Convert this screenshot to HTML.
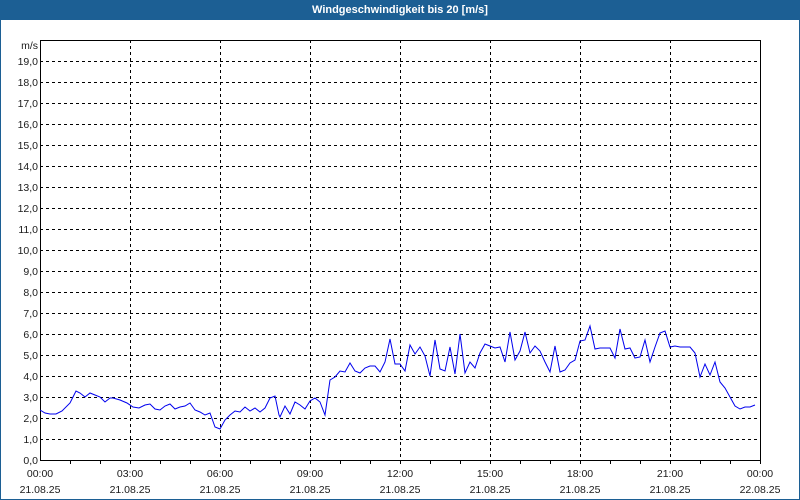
<!DOCTYPE html>
<html><head><meta charset="utf-8"><style>
html,body{margin:0;padding:0;background:#fff;}
svg{display:block;}
text{font-family:"Liberation Sans",sans-serif;font-size:10.5px;fill:#1a1a1a;}
</style></head><body>
<svg width="800" height="500" viewBox="0 0 800 500" xmlns="http://www.w3.org/2000/svg">
<rect x="0" y="0" width="800" height="500" fill="#fff"/>
<rect x="0.5" y="0.5" width="799" height="499" fill="none" stroke="#1c5f94"/>
<rect x="0" y="0" width="800" height="20" fill="#1c5f94"/>
<text x="400" y="13" text-anchor="middle" style="fill:#fff;font-weight:bold;font-size:11px">Windgeschwindigkeit bis 20 [m/s]</text>
<g stroke="#000" stroke-dasharray="3,3" stroke-width="1">
<line x1="40" y1="61.5" x2="760" y2="61.5"/><line x1="40" y1="82.5" x2="760" y2="82.5"/><line x1="40" y1="103.5" x2="760" y2="103.5"/><line x1="40" y1="124.5" x2="760" y2="124.5"/><line x1="40" y1="145.5" x2="760" y2="145.5"/><line x1="40" y1="166.5" x2="760" y2="166.5"/><line x1="40" y1="187.5" x2="760" y2="187.5"/><line x1="40" y1="208.5" x2="760" y2="208.5"/><line x1="40" y1="229.5" x2="760" y2="229.5"/><line x1="40" y1="250.5" x2="760" y2="250.5"/><line x1="40" y1="271.5" x2="760" y2="271.5"/><line x1="40" y1="292.5" x2="760" y2="292.5"/><line x1="40" y1="313.5" x2="760" y2="313.5"/><line x1="40" y1="334.5" x2="760" y2="334.5"/><line x1="40" y1="355.5" x2="760" y2="355.5"/><line x1="40" y1="376.5" x2="760" y2="376.5"/><line x1="40" y1="397.5" x2="760" y2="397.5"/><line x1="40" y1="418.5" x2="760" y2="418.5"/><line x1="40" y1="439.5" x2="760" y2="439.5"/>
<line x1="130.5" y1="40" x2="130.5" y2="460"/><line x1="220.5" y1="40" x2="220.5" y2="460"/><line x1="310.5" y1="40" x2="310.5" y2="460"/><line x1="400.5" y1="40" x2="400.5" y2="460"/><line x1="490.5" y1="40" x2="490.5" y2="460"/><line x1="580.5" y1="40" x2="580.5" y2="460"/><line x1="670.5" y1="40" x2="670.5" y2="460"/>
</g>
<rect x="40.5" y="40.5" width="720" height="420" fill="none" stroke="#000"/>
<g stroke="#000">
<line x1="70.5" y1="460" x2="70.5" y2="464"/><line x1="100.5" y1="460" x2="100.5" y2="464"/><line x1="130.5" y1="460" x2="130.5" y2="464"/><line x1="160.5" y1="460" x2="160.5" y2="464"/><line x1="190.5" y1="460" x2="190.5" y2="464"/><line x1="220.5" y1="460" x2="220.5" y2="464"/><line x1="250.5" y1="460" x2="250.5" y2="464"/><line x1="280.5" y1="460" x2="280.5" y2="464"/><line x1="310.5" y1="460" x2="310.5" y2="464"/><line x1="340.5" y1="460" x2="340.5" y2="464"/><line x1="370.5" y1="460" x2="370.5" y2="464"/><line x1="400.5" y1="460" x2="400.5" y2="464"/><line x1="430.5" y1="460" x2="430.5" y2="464"/><line x1="460.5" y1="460" x2="460.5" y2="464"/><line x1="490.5" y1="460" x2="490.5" y2="464"/><line x1="520.5" y1="460" x2="520.5" y2="464"/><line x1="550.5" y1="460" x2="550.5" y2="464"/><line x1="580.5" y1="460" x2="580.5" y2="464"/><line x1="610.5" y1="460" x2="610.5" y2="464"/><line x1="640.5" y1="460" x2="640.5" y2="464"/><line x1="670.5" y1="460" x2="670.5" y2="464"/><line x1="700.5" y1="460" x2="700.5" y2="464"/><line x1="730.5" y1="460" x2="730.5" y2="464"/><line x1="760.5" y1="460" x2="760.5" y2="464"/>
</g>
<g text-anchor="end">
<text x="38" y="49">m/s</text>
<text x="38" y="65">19,0</text><text x="38" y="86">18,0</text><text x="38" y="107">17,0</text><text x="38" y="128">16,0</text><text x="38" y="149">15,0</text><text x="38" y="170">14,0</text><text x="38" y="191">13,0</text><text x="38" y="212">12,0</text><text x="38" y="233">11,0</text><text x="38" y="254">10,0</text><text x="38" y="275">9,0</text><text x="38" y="296">8,0</text><text x="38" y="317">7,0</text><text x="38" y="338">6,0</text><text x="38" y="359">5,0</text><text x="38" y="380">4,0</text><text x="38" y="401">3,0</text><text x="38" y="422">2,0</text><text x="38" y="443">1,0</text><text x="38" y="464">0,0</text>
</g>
<g text-anchor="middle">
<text x="40" y="477">00:00</text><text x="40" y="493">21.08.25</text>
<text x="130" y="477">03:00</text><text x="130" y="493">21.08.25</text>
<text x="220" y="477">06:00</text><text x="220" y="493">21.08.25</text>
<text x="310" y="477">09:00</text><text x="310" y="493">21.08.25</text>
<text x="400" y="477">12:00</text><text x="400" y="493">21.08.25</text>
<text x="490" y="477">15:00</text><text x="490" y="493">21.08.25</text>
<text x="580" y="477">18:00</text><text x="580" y="493">21.08.25</text>
<text x="670" y="477">21:00</text><text x="670" y="493">21.08.25</text>
<text x="760" y="477">00:00</text><text x="760" y="493">22.08.25</text>
</g>
<polyline fill="none" stroke="#0000ee" stroke-width="1" points="40,410 45,413 50,414 56,414 62,411 70,403 73,397 76,391 80,393 85,397 90,393 95,395 100,397 105,402 110,398 113,398 120,400 127,403 133,407 139,408 145,405 150,404 155,409 160,410 165,406 170,404 175,409 180,407 185,406 190,403 195,410 200,412 205,415 210,413 215,427 220,429 225,420 230,415 235,411 240,412 245,407 250,411 255,408 260,412 265,408 270,398 275,396 279,415 280,417 285,406 290,414 295,402 300,405 305,409 310,401 315,398 320,402 325,415 330,380 335,377 340,371 345,372 350,363 355,371 360,373 365,368 370,366 375,366 380,372 385,362 390,339 395,364 400,364 405,371 410,345 415,354 420,347 425,356 430,376 435,340 440,369 445,371 450,347 455,374 460,334 465,373 470,362 475,368 480,353 485,344 490,346 495,348 500,347 505,362 510,332 515,360 520,351 525,332 530,353 535,346 540,351 545,362 550,372 555,346 560,372 565,370 570,363 575,360 580,341 585,340 590,326 595,349 600,348 605,348 610,348 615,358 620,329 625,349 630,348 635,358 640,357 645,340 650,362 655,347 660,333 665,331 670,347 675,346 680,347 685,347 690,347 695,353 700,377 705,364 710,375 715,362 720,382 725,388 730,397 735,406 740,409 745,407 750,407 755,405"/>
</svg>
</body></html>
